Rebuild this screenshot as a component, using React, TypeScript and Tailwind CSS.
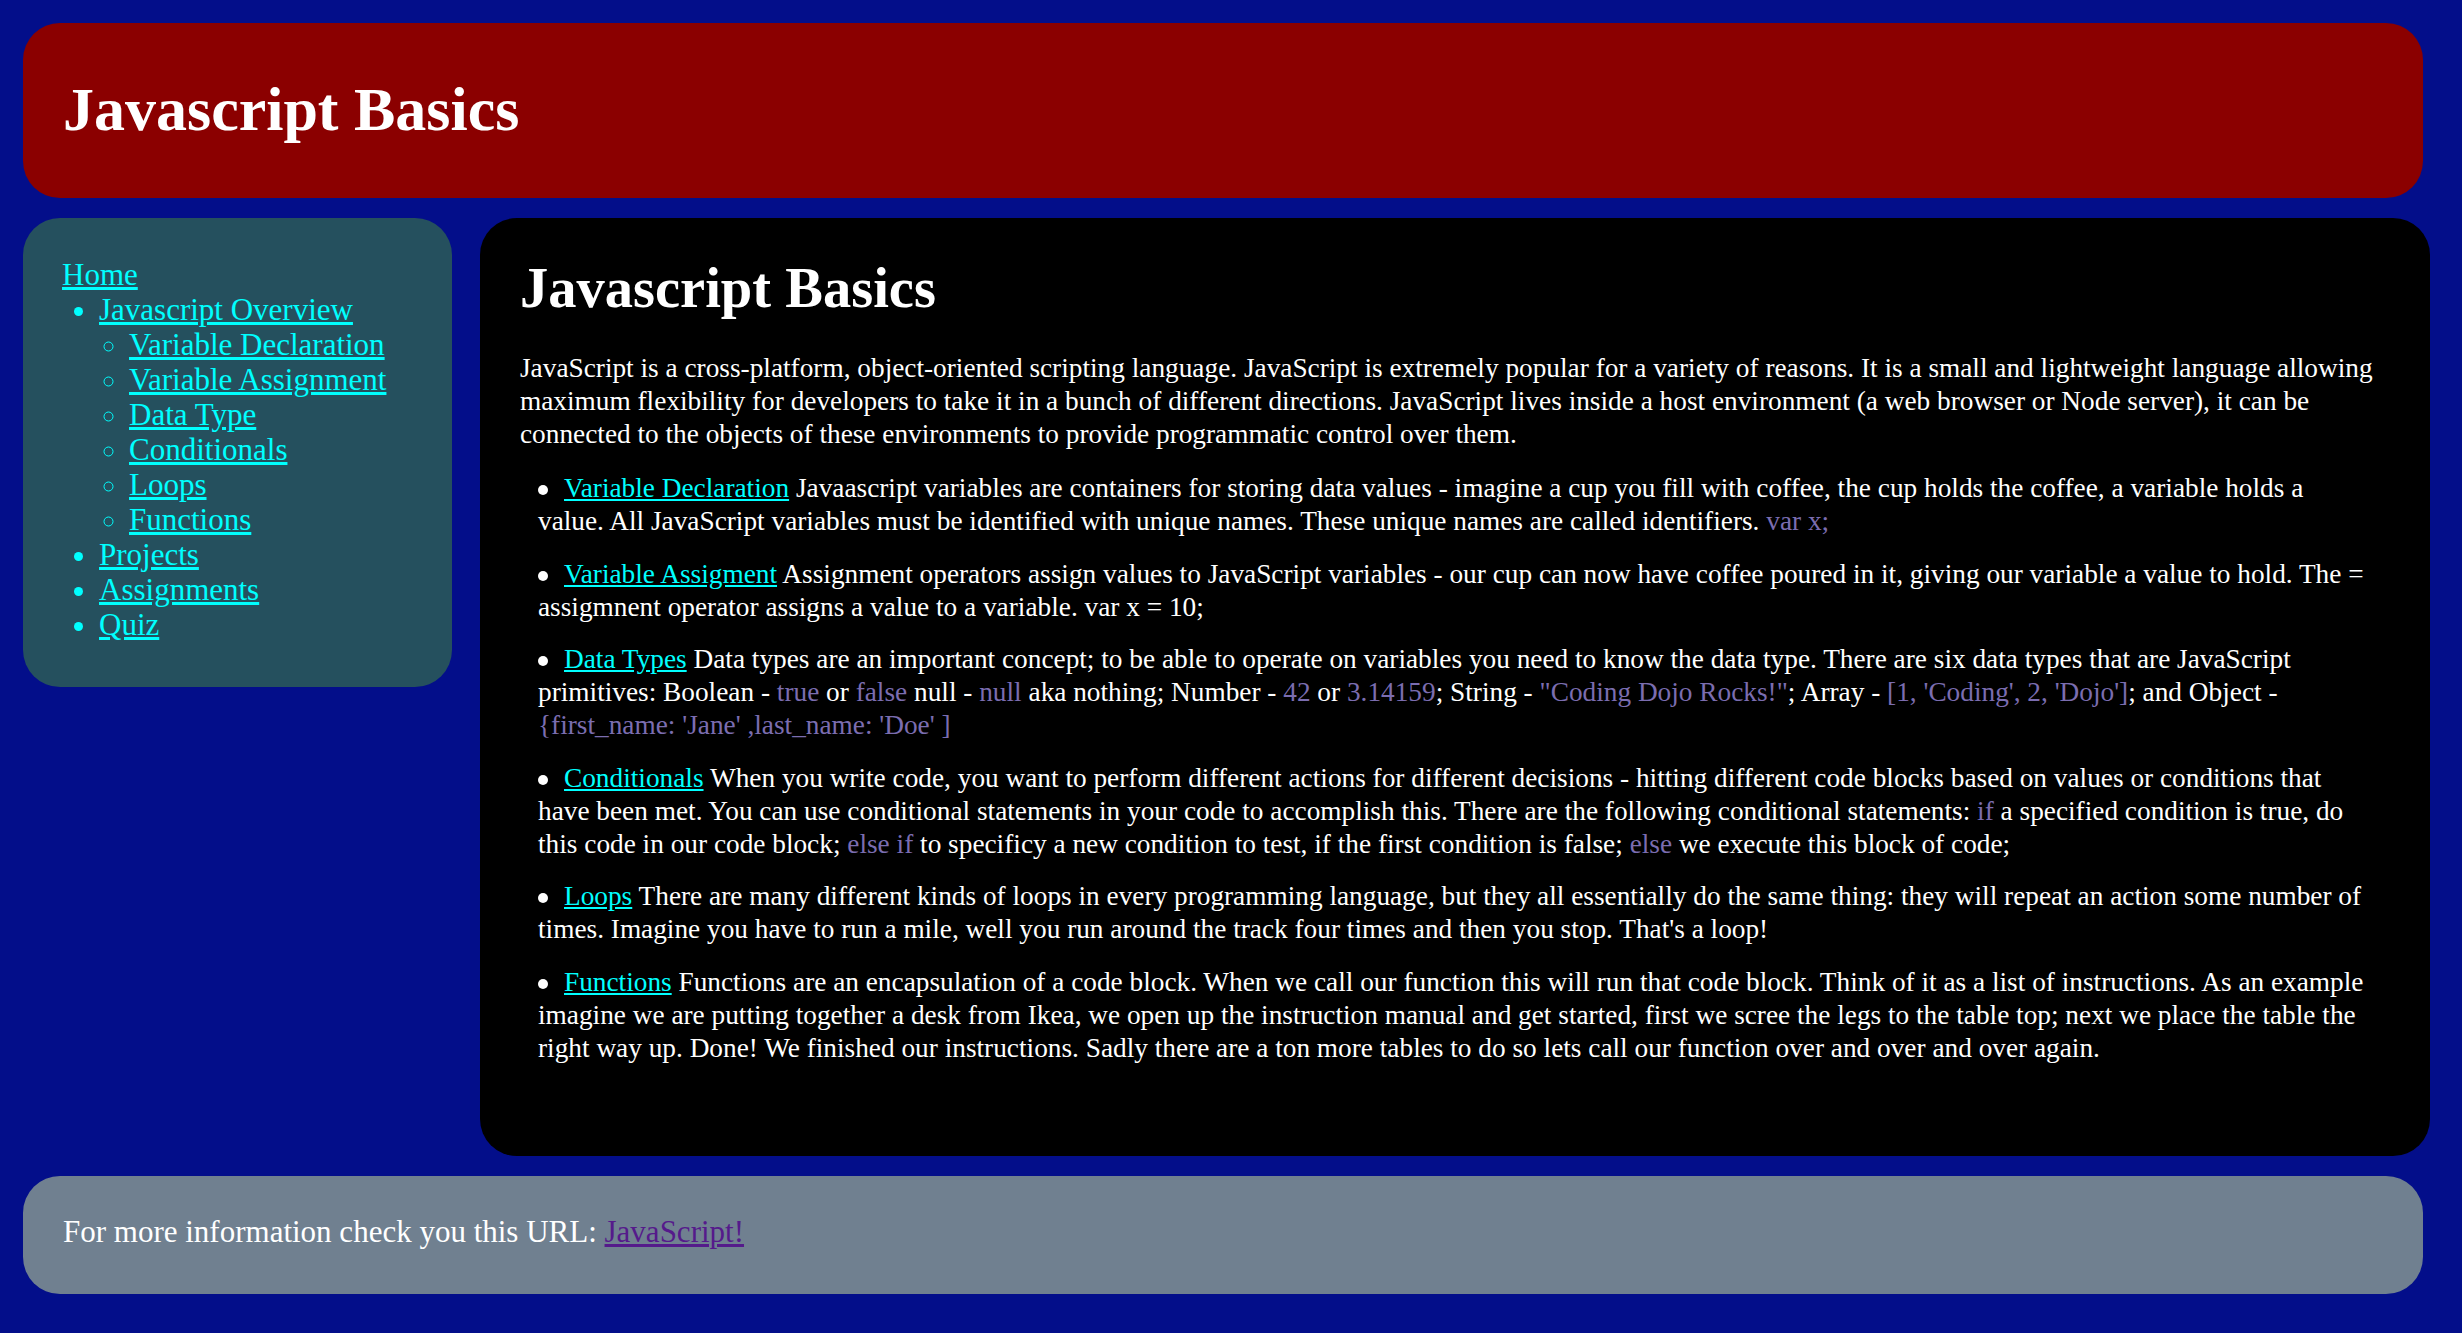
import React from "react";

const Code: React.FC<{ children: React.ReactNode }> = ({ children }) => (
  <span className="text-[#7b6db0]">{children}</span>
);

const NavLink: React.FC<{ children: React.ReactNode }> = ({ children }) => (
  <a href="#" className="underline">
    {children}
  </a>
);

const Topic: React.FC<{ title: string; children: React.ReactNode; first?: boolean }> = ({
  title,
  children,
  first,
}) => (
  <li className={first ? "" : "mt-[19.5px]"}>
    <span className="mr-[16px] inline-block h-[10px] w-[10px] rounded-full bg-white align-[2px]" />
    <a href="#" className="text-[#00ffff] underline">
      {title}
    </a>{" "}
    {children}
  </li>
);

export default function App() {
  return (
    <div className="min-h-screen bg-[#030e8a] pb-[41px] pl-[23px] pt-[23px] font-['Liberation_Serif','Times_New_Roman',serif] text-[31px] leading-[35px] text-white">
      <header className="flex h-[175px] w-[2400px] items-center rounded-[37px] bg-[#8b0000] pb-[3px] pl-[40px]">
        <h1 className="text-[62px] font-bold leading-[69px]">Javascript Basics</h1>
      </header>

      <div className="mt-[20px] flex items-start gap-[28px]">
        <nav className="w-[429px] rounded-[37px] bg-[#25505e] pb-[45px] pl-[39px] pt-[39px] text-[#00ffff]">
          <NavLink>Home</NavLink>
          <ul className="list-disc pl-[37px]">
            <li>
              <NavLink>Javascript Overview</NavLink>
              <ul className="list-[circle] pl-[30px]">
                <li>
                  <NavLink>Variable Declaration</NavLink>
                </li>
                <li>
                  <NavLink>Variable Assignment</NavLink>
                </li>
                <li>
                  <NavLink>Data Type</NavLink>
                </li>
                <li>
                  <NavLink>Conditionals</NavLink>
                </li>
                <li>
                  <NavLink>Loops</NavLink>
                </li>
                <li>
                  <NavLink>Functions</NavLink>
                </li>
              </ul>
            </li>
            <li>
              <NavLink>Projects</NavLink>
            </li>
            <li>
              <NavLink>Assignments</NavLink>
            </li>
            <li>
              <NavLink>Quiz</NavLink>
            </li>
          </ul>
        </nav>

        <main className="w-[1950px] rounded-[37px] bg-black pb-[91px] pl-[40px] pr-[30px] pt-[39px] text-[27.3px] leading-[33px]">
          <h1 className="text-[56.5px] font-bold leading-[62px]">Javascript Basics</h1>
          <p className="mt-[33px]">
            JavaScript is a cross-platform, object-oriented scripting language. JavaScript is extremely popular
            for a variety of reasons. It is a small and lightweight language allowing
            <br />
            maximum flexibility for developers to take it in a bunch of different directions. JavaScript lives
            inside a host environment (a web browser or Node server), it can be
            <br />
            connected to the objects of these environments to provide programmatic control over them.
          </p>
          <ul className="mt-[21px] pl-[18px]">
            <Topic title="Variable Declaration" first>
              Javaascript variables are containers for storing data values - imagine a cup you fill with coffee,
              the cup holds the coffee, a variable holds a
              <br />
              value. All JavaScript variables must be identified with unique names. These unique names are called
              identifiers. <Code>var x;</Code>
            </Topic>
            <Topic title="Variable Assigment">
              Assignment operators assign values to JavaScript variables - our cup can now have coffee poured in
              it, giving our variable a value to hold. The =
              <br />
              assigmnent operator assigns a value to a variable. var x = 10;
            </Topic>
            <Topic title="Data Types">
              Data types are an important concept; to be able to operate on variables you need to know the data
              type. There are six data types that are JavaScript
              <br />
              primitives: Boolean - <Code>true</Code> or <Code>false</Code> null - <Code>null</Code> aka nothing;
              Number - <Code>42</Code> or <Code>3.14159</Code>; String - <Code>"Coding Dojo Rocks!"</Code>; Array
              - <Code>[1, 'Coding', 2, 'Dojo']</Code>; and Object -
              <br />
              <Code>{"{first_name: 'Jane' ,last_name: 'Doe' ]"}</Code>
            </Topic>
            <Topic title="Conditionals">
              When you write code, you want to perform different actions for different decisions - hitting
              different code blocks based on values or conditions that
              <br />
              have been met. You can use conditional statements in your code to accomplish this. There are the
              following conditional statements: <Code>if</Code> a specified condition is true, do
              <br />
              this code in our code block; <Code>else if</Code> to specificy a new condition to test, if the first
              condition is false; <Code>else</Code> we execute this block of code;
            </Topic>
            <Topic title="Loops">
              There are many different kinds of loops in every programming language, but they all essentially do
              the same thing: they will repeat an action some number of
              <br />
              times. Imagine you have to run a mile, well you run around the track four times and then you stop.
              That's a loop!
            </Topic>
            <Topic title="Functions">
              Functions are an encapsulation of a code block. When we call our function this will run that code
              block. Think of it as a list of instructions. As an example
              <br />
              imagine we are putting together a desk from Ikea, we open up the instruction manual and get started,
              first we scree the legs to the table top; next we place the table the
              <br />
              right way up. Done! We finished our instructions. Sadly there are a ton more tables to do so lets
              call our function over and over and over again.
            </Topic>
          </ul>
        </main>
      </div>

      <footer className="mt-[20px] flex h-[118px] w-[2400px] items-center rounded-[37px] bg-[#708090] pb-[6px] pl-[40px]">
        <span>
          For more information check you this URL:{" "}
          <a href="#" className="text-[#551a8b] underline">
            JavaScript!
          </a>
        </span>
      </footer>
    </div>
  );
}
